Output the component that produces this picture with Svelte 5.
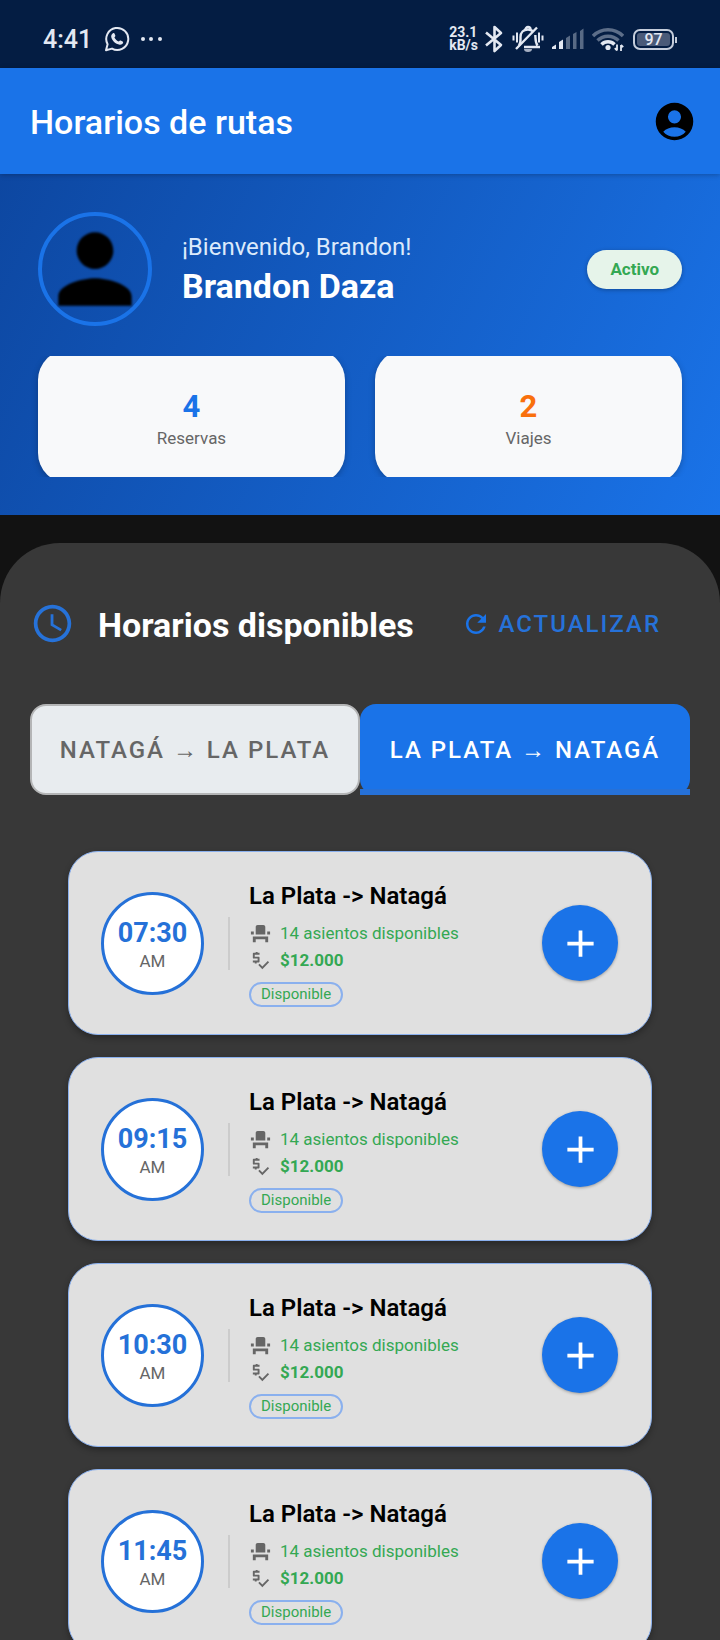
<script>
  const stats = [
    { value: 4, label: 'Reservas', tone: 'blue' },
    { value: 2, label: 'Viajes', tone: 'orange' }
  ];
  const routes = [
    { from: 'NATAGÁ', to: 'LA PLATA' },
    { from: 'LA PLATA', to: 'NATAGÁ' }
  ];
  let selected = $state(1);
  const trips = ['07:30', '09:15', '10:30', '11:45'].map((time) => ({
    time,
    half: 'AM',
    route: 'La Plata -> Natagá',
    seats: '14 asientos disponibles',
    price: '$12.000',
    status: 'Disponible'
  }));
</script>

<div class="app">
  <div class="status">
    <span class="clock">4:41</span>
    <svg class="whatsapp" width="26" height="26" viewBox="0 0 26 26" fill="none">
      <path d="M2 24.2l1.6-6A11 11 0 1 1 8 22.6z" stroke="#e3e8f2" stroke-width="2" stroke-linejoin="round" />
      <path d="M8.900 7.300c.6-.5 1.300-.4 1.600.3l.8 1.900c.2.500 0 .9-.9 1.900 1 1.900 2.500 3.300 4.500 4.200.9-1.100 1.200-1.300 1.800-1l1.900 1c.6.3.7.8.4 1.500-.5 1.200-1.900 1.900-3.300 1.700-4.300-.7-7.800-4.100-8.500-8-.2-1.500.7-2.700 1.700-3.500z" fill="#e3e8f2" />
    </svg>
    <svg width="24" height="6" viewBox="0 0 24 6" fill="#e3e8f2">
      <circle cx="4" cy="3" r="2" /><circle cx="12" cy="3" r="2" /><circle cx="21" cy="3" r="2" />
    </svg>
    <span class="speed">23.1<br />kB/s</span>
    <svg width="20" height="28" viewBox="0 0 20 28" fill="none" stroke="#e3e8f2" stroke-width="2.600" stroke-linejoin="round">
      <path d="M2 7.500L17 20l-6.500 6V2L17 8 2 20.500" />
    </svg>
    <svg class="bell" width="32" height="28" viewBox="0 0 32 28" fill="none" stroke="#e3e8f2" stroke-width="2.400">
      <path d="M7 20.500C9 18 8.500 15 8.500 12c0-4.500 3-7.500 7.500-7.500 2 0 3.500.6 5 1.800M23.300 10c.3 3-.3 7 2.200 10.500M12 22h16" />
      <path d="M13.500 4.500a2.500 2.500 0 0 1 5 0M25 2.500L4 24" />
      <path d="M1.500 10.500v5M5 7.500v10M27 7.500v10M30.500 10.500v5" stroke-width="2" />
      <path d="M12 24h8a4 3 0 0 1-8 0z" fill="#a5afc2" stroke="none" />
    </svg>
    <svg class="signal" width="32" height="22" viewBox="0 0 32 22" fill="#e3e8f2">
      <path d="M0 21v-2l4-2.500V21zM7 21v-7l4-2.500V21z" />
      <path d="M14 21v-11l4-2.500V21zM21 21V6l3.500-2V21zM28 21V3l3.500-2.500V21z" opacity=".38" />
    </svg>
    <svg width="32" height="24" viewBox="0 0 32 24" fill="none" stroke="#e3e8f2" stroke-width="3.400">
      <path d="M1 9a21 21 0 0 1 30 0" opacity=".4" />
      <path d="M5.500 13.500a15 15 0 0 1 21 0" opacity=".4" />
      <path d="M9.500 17.500a9 9 0 0 1 13 0" />
      <circle cx="16" cy="20.500" r="2.600" fill="#e3e8f2" stroke="none" />
      <path d="M25 17.500v6M29 24v-6M22.800 21.200l2.200 2.300M29 18l2.200 2.200" stroke-width="1.800" />
    </svg>
    <span class="battery"><span class="level">97</span></span>
  </div>

  <header class="bar">
    <h1>Horarios de rutas</h1>
    <button class="account" aria-label="Cuenta">
      <svg width="45" height="45" viewBox="0 0 24 24">
        <path fill-rule="evenodd" d="M12 2a10 10 0 1 1 0 20 10 10 0 0 1 0-20zm0 4a3.500 3.500 0 1 0 0 7 3.500 3.500 0 0 0 0-7zm0 9.100c-2.400 0-4.600.9-6 2.300 1.500 1.800 3.600 2.700 6 2.700s4.500-.9 6-2.700c-1.400-1.400-3.600-2.300-6-2.300z" />
      </svg>
    </button>
  </header>

  <section class="profile">
    <div class="person">
      <div class="avatar">
        <svg width="110" height="110" viewBox="0 0 24 24">
          <path d="M12 12c2.210 0 4-1.790 4-4s-1.790-4-4-4-4 1.790-4 4 1.790 4 4 4zm0 2c-2.670 0-8 1.340-8 4v2h16v-2c0-2.660-5.330-4-8-4z" />
        </svg>
      </div>
      <div class="names">
        <p class="welcome">¡Bienvenido, Brandon!</p>
        <p class="name">Brandon Daza</p>
      </div>
      <span class="badge">Activo</span>
    </div>
    <div class="stats">
      {#each stats as s}
        <div class="stat">
          <strong class={s.tone}>{s.value}</strong>
          <span>{s.label}</span>
        </div>
      {/each}
    </div>
  </section>

  <main class="panel">
    <div class="heading">
      <svg width="45" height="45" viewBox="0 0 24 24" fill="#2672d9">
        <path d="M11.990 2C6.470 2 2 6.480 2 12s4.470 10 9.990 10C17.520 22 22 17.520 22 12S17.520 2 11.990 2zM12 20c-4.420 0-8-3.580-8-8s3.580-8 8-8 8 3.580 8 8-3.580 8-8 8zm.5-13H11v6l5.250 3.150.75-1.230-4.500-2.670z" />
      </svg>
      <h2>Horarios disponibles</h2>
      <button class="refresh">
        <svg width="30" height="30" viewBox="0 0 24 24" fill="#1a73e8">
          <path d="M17.650 6.350C16.200 4.900 14.210 4 12 4c-4.420 0-7.990 3.580-7.990 8s3.570 8 7.990 8c3.730 0 6.840-2.550 7.730-6h-2.080c-.82 2.330-3.040 4-5.650 4-3.310 0-6-2.690-6-6s2.690-6 6-6c1.660 0 3.140.69 4.220 1.780L13 11h7V4l-2.350 2.350z" />
        </svg>
        <span>ACTUALIZAR</span>
      </button>
    </div>

    <div class="toggle">
      {#each routes as r, i}
        <button class:active={selected === i} aria-pressed={selected === i} onclick={() => (selected = i)}>
          {r.from} <span class="arrow">→</span> {r.to}
        </button>
      {/each}
    </div>

    <div class="list">
      {#each trips as t}
        <article class="trip">
          <div class="time"><strong>{t.time}</strong><span>{t.half}</span></div>
          <div class="divider"></div>
          <div class="info">
            <h3>{t.route}</h3>
            <p>
              <svg width="23" height="23" viewBox="0 0 24 24" fill="#666">
                <path d="M4 18v3h3v-3h10v3h3v-6H4zm15-8h3v3h-3zM2 10h3v3H2zm15 3H7V5c0-1.100.9-2 2-2h6c1.100 0 2 .9 2 2v8z" />
              </svg>
              {t.seats}
            </p>
            <p class="price">
              <svg width="23" height="23" viewBox="0 0 24 24" fill="#666">
                <path d="M11 13V9c0-.55-.45-1-1-1H6V6h5V4H9V3H7v1H5c-.55 0-1 .45-1 1v4c0 .55.45 1 1 1h4v2H4v2h2v1h2v-1h2c.55 0 1-.45 1-1zM19.590 12.520l-5.660 5.650-2.830-2.830-1.410 1.420L13.930 21 21 13.930z" />
              </svg>
              {t.price}
            </p>
            <span class="chip">{t.status}</span>
          </div>
          <button class="add" aria-label="Reservar">
            <svg width="45" height="45" viewBox="0 0 24 24" fill="#fff"><path d="M19 13h-6v6h-2v-6H5v-2h6V5h2v6h6z" /></svg>
          </button>
        </article>
      {/each}
    </div>
  </main>
</div>

<style>
  :global(body) {
    margin: 0;
    background: #121212;
  }
  .app {
    height: 100vh;
    overflow: hidden;
    display: flex;
    flex-direction: column;
    background: #121212;
    font-family: Roboto, 'Liberation Sans', sans-serif;
  }
  h1, h2, h3, p {
    margin: 0;
  }
  svg {
    display: block;
    flex: none;
  }
  button {
    font: inherit;
    border: 0;
    padding: 0;
    background: none;
    cursor: pointer;
  }

  .status {
    display: flex;
    align-items: center;
    flex: none;
    height: 58px;
    padding: 10px 43px 0;
    background: #041d43;
    color: #e3e8f2;
  }
  .clock {
    padding-top: 2px;
    font-size: 25px;
    font-weight: 500;
    line-height: 30px;
    margin-right: 12px;
  }
  .whatsapp {
    margin-right: 9px;
  }
  .speed {
    margin-left: auto;
    margin-right: 6px;
    font-size: 14px;
    line-height: 13px;
    font-weight: 700;
  }
  .bell {
    margin: 0 8px;
  }
  .signal {
    margin-right: 8px;
  }
  .battery {
    position: relative;
    box-sizing: border-box;
    width: 41px;
    height: 21px;
    margin: 0 3px 0 9px;
    padding: 2px;
    border: 2px solid #c5cddb;
    border-radius: 7px;
  }
  .battery::after {
    content: '';
    position: absolute;
    right: -5px;
    top: 6px;
    width: 2px;
    height: 6px;
    background: #c5cddb;
  }
  .level {
    display: block;
    height: 13px;
    border-radius: 3px;
    background: #4a5a78;
    font-size: 16px;
    font-weight: 500;
    line-height: 14px;
    text-align: center;
  }

  .bar {
    display: flex;
    align-items: center;
    justify-content: space-between;
    flex: none;
    height: 106px;
    padding: 0 23px 0 30px;
    background: #1a73e8;
    box-shadow: 0 1px 5px rgba(0, 0, 0, 0.25);
    position: relative;
  }
  h1 {
    padding-top: 2px;
    font-size: 34px;
    line-height: 40px;
    font-weight: 500;
    color: #fff;
  }

  .profile {
    flex: none;
    padding: 38px;
    background: linear-gradient(115deg, #0d47a1, #1a73e8);
  }
  .person {
    display: flex;
    align-items: center;
  }
  .avatar {
    box-sizing: border-box;
    display: flex;
    align-items: center;
    justify-content: center;
    width: 114px;
    height: 114px;
    border: 4px solid #1a73e8;
    border-radius: 50%;
  }
  .avatar svg {
    filter: blur(1px);
  }
  .names {
    flex: 1;
    padding: 2px 0 0 30px;
  }
  .welcome {
    font-size: 24px;
    line-height: 32px;
    color: #dceafb;
  }
  .name {
    font-size: 34px;
    line-height: 46px;
    font-weight: 700;
    color: #fff;
  }
  .badge {
    padding: 0 23px;
    border-radius: 20px;
    background: #e6f4ea;
    color: #34a853;
    font-size: 17px;
    line-height: 39px;
    font-weight: 700;
    box-shadow: 0 1px 4px rgba(0, 0, 0, 0.3);
  }
  .stats {
    display: grid;
    grid-template-columns: 1fr 1fr;
    gap: 30px;
    margin-top: 24px;
    margin-bottom: -6px;
  }
  .stat {
    display: flex;
    flex-direction: column;
    align-items: center;
    padding: 39px 0 32px;
    border-radius: 30px;
    background: #f8f9fa;
    box-shadow: 0 2px 6px rgba(0, 0, 0, 0.25);
    clip-path: inset(6px -8px);
  }
  .stat strong {
    font-size: 31px;
    line-height: 36px;
  }
  .stat span {
    font-size: 17px;
    line-height: 26px;
    color: #666;
  }
  .blue { color: #1a73e8; }
  .orange { color: #f9700c; }

  .panel {
    flex: 1;
    min-height: 0;
    overflow: hidden;
    margin-top: 28px;
    padding: 58px 30px 0;
    border-radius: 60px 60px 0 0;
    background: #383838;
  }
  .heading {
    display: flex;
    align-items: center;
    height: 45px;
  }
  h2 {
    flex: 1;
    padding: 2px 0 0 23px;
    font-size: 34px;
    line-height: 44px;
    font-weight: 700;
    color: #fff;
    white-space: nowrap;
  }
  .refresh {
    display: flex;
    align-items: center;
    gap: 8px;
    padding-right: 29px;
    font-size: 24px;
    line-height: 43px;
    font-weight: 500;
    letter-spacing: 2px;
    color: #2672d9;
  }
  .refresh span {
    padding-top: 2px;
  }
  .toggle {
    display: grid;
    grid-template-columns: 1fr 1fr;
    margin-top: 58px;
  }
  .toggle button {
    position: relative;
    height: 91px;
    border: 2px solid #b4b5b6;
    border-radius: 16px;
    background: #e8ecef;
    color: #666;
    font-size: 24px;
    font-weight: 500;
    letter-spacing: 2px;
    white-space: nowrap;
  }
  .toggle .active {
    border: 0;
    background: #1a73e8;
    color: #fff;
  }
  .toggle .active::after {
    content: '';
    position: absolute;
    inset: auto 0 0;
    height: 6px;
    background: #2671d8;
  }
  .arrow {
    font-family: 'Noto Sans', 'Liberation Sans', sans-serif;
    font-size: 24px;
    line-height: 24px;
  }

  .list {
    display: flex;
    flex-direction: column;
    gap: 22px;
    padding: 56px 38px 0;
  }
  .trip {
    box-sizing: border-box;
    display: flex;
    align-items: center;
    height: 184px;
    padding: 0 33px 0 32px;
    border: 1px solid #8ab0ee;
    border-radius: 30px;
    background: #e0e0e0;
    box-shadow: 0 3px 6px rgba(0, 0, 0, 0.3);
  }
  .time {
    box-sizing: border-box;
    display: flex;
    flex-direction: column;
    align-items: center;
    justify-content: center;
    width: 103px;
    height: 103px;
    padding-top: 5px;
    border: 3px solid #2571d8;
    border-radius: 50%;
    background: #fff;
  }
  .time strong {
    font-size: 27px;
    line-height: 32px;
    color: #2571d8;
  }
  .time span {
    font-size: 17px;
    line-height: 25px;
    color: #666;
  }
  .divider {
    width: 2px;
    height: 53px;
    margin: 0 19px 0 24px;
    background: #ccc;
  }
  .info {
    flex: 1;
    padding-top: 1px;
  }
  h3 {
    font-size: 24px;
    line-height: 32px;
    font-weight: 600;
    color: #000;
    margin-bottom: 8px;
  }
  .info p {
    display: flex;
    align-items: center;
    gap: 8px;
    font-size: 17px;
    line-height: 27px;
    color: #34a853;
  }
  .info .price {
    font-weight: 700;
  }
  .chip {
    display: inline-block;
    margin-top: 8px;
    padding: 0 10px;
    border: 2px solid #8ab0ee;
    border-radius: 13px;
    font-size: 15px;
    line-height: 21px;
    color: #34a853;
  }
  .add {
    display: flex;
    align-items: center;
    justify-content: center;
    width: 76px;
    height: 76px;
    border-radius: 50%;
    background: #1a73e8;
    box-shadow: 0 1px 3px rgba(0, 0, 0, 0.3);
  }
</style>
